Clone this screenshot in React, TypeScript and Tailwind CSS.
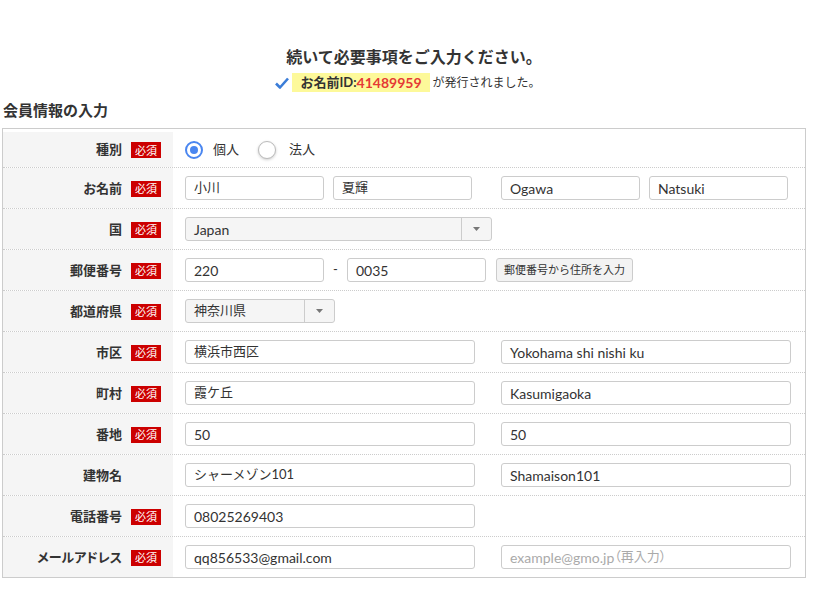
import React from "react";

const FONT = "font-['Lato','Noto_Sans_CJK_JP',sans-serif]";

function Badge() {
  return (
    <span className="inline-flex h-4 w-[30px] items-center justify-center bg-[#cc0000] text-[11px] leading-none text-white">
      必須
    </span>
  );
}

function Row({
  label,
  required = true,
  children,
  last = false,
  h = "h-[41px]",
  extra = "",
}: {
  label: string;
  required?: boolean;
  children?: React.ReactNode;
  last?: boolean;
  h?: string;
  extra?: string;
}) {
  return (
    <div className={`flex ${h} ${extra} ${last ? "" : "border-b border-dotted border-[#cccccc]"}`}>
      <div className="flex w-[170px] shrink-0 items-center justify-end gap-[9px] bg-[#f5f5f5] pr-3 pt-[1px]">
        <span className="text-[13px] font-bold text-[#333] [font-feature-settings:'palt']">{label}</span>
        {required ? <Badge /> : <span className="w-[30px]" />}
      </div>
      <div className="flex flex-1 items-center pl-3">{children}</div>
    </div>
  );
}

function Input({
  value,
  w,
  placeholder,
  jp = false,
}: {
  value?: string;
  w: string;
  placeholder?: React.ReactNode;
  jp?: boolean;
}) {
  return (
    <div
      className={`flex h-6 ${w} items-center rounded-[3px] border border-[#cccccc] bg-white px-2 ${
        jp ? "text-[13px]" : "text-[14px]"
      } ${value ? "text-[#333]" : "text-[#aaaaaa]"}`}
    >
      {value ?? placeholder}
    </div>
  );
}

function Select({ value, w, jp = false }: { value: string; w: string; jp?: boolean }) {
  return (
    <div
      className={`flex h-6 ${w} items-stretch rounded-[3px] border border-[#cccccc] bg-[#f5f5f5] ${
        jp ? "text-[13px]" : "text-[14px]"
      } text-[#333]`}
    >
      <div className="flex flex-1 items-center px-2">{value}</div>
      <div className="flex w-[30px] items-center justify-center border-l border-[#cccccc]">
        <svg width="7" height="4" viewBox="0 0 7 4">
          <path d="M0 0 L7 0 L3.5 4 Z" fill="#777" />
        </svg>
      </div>
    </div>
  );
}

export default function App() {
  return (
    <div className={`min-h-[601px] w-[828px] bg-white ${FONT} text-[#333]`}>
      <div className="pt-[45px]">
        <h1 className="h-6 text-center text-[16px] font-bold leading-6 text-[#333]">
          続いて必要事項をご入力ください。
        </h1>
        <div className="mt-1 flex h-[19px] items-center justify-center">
          <svg width="14" height="12" viewBox="0 0 14 12" className="ml-[-12px] mr-[3px]">
            <path d="M1 6.5 L5 10.5 L13 1.5" stroke="#3b7dd8" strokeWidth="2.6" fill="none" strokeLinejoin="round" />
          </svg>
          <span className="flex h-[19px] items-center bg-[#fdf99a] px-2 font-bold">
            <span className="text-[13px] text-[#333]">お名前ID:</span>
            <span className="text-[14px] text-[#e53935]">41489959</span>
          </span>
          <span className="ml-[3px] text-[12px] text-[#333]">が発行されました。</span>
        </div>
        <h2 className="mt-2 h-5 pl-[3px] text-[15px] font-bold leading-5 text-[#333]">会員情報の入力</h2>
      </div>

      <div className="ml-[2px] mt-2 w-[804px] border border-[#cccccc]">
        <Row label="種別" h="h-[39px]" extra="pt-[3px]">
          <div className="flex items-center text-[13px]">
            <span className="flex h-[18px] w-[18px] items-center justify-center rounded-full border-2 border-[#4a86f0]">
              <span className="h-2 w-2 rounded-full bg-[#4a86f0]" />
            </span>
            <span className="ml-[10px]">個人</span>
            <span className="ml-[19px] h-[18px] w-[18px] rounded-full border border-[#bbbbbb] bg-white shadow-[0_1px_3px_rgba(0,0,0,0.2)]" />
            <span className="ml-[13px]">法人</span>
          </div>
        </Row>
        <Row label="お名前">
          <div className="flex gap-[9px]">
            <Input value="小川" w="w-[139px]" jp />
            <Input value="夏輝" w="w-[139px]" jp />
          </div>
          <div className="ml-[29px] flex gap-[9px]">
            <Input value="Ogawa" w="w-[139px]" />
            <Input value="Natsuki" w="w-[139px]" />
          </div>
        </Row>
        <Row label="国">
          <Select value="Japan" w="w-[307px]" />
        </Row>
        <Row label="郵便番号">
          <Input value="220" w="w-[139px]" />
          <span className="w-[23px] text-center text-[13px]">-</span>
          <Input value="0035" w="w-[139px]" />
          <div className="ml-[10px] flex h-6 items-center rounded-[3px] border border-[#cccccc] bg-[#f3f3f3] px-[7px] text-[11px] text-[#333]">
            郵便番号から住所を入力
          </div>
        </Row>
        <Row label="都道府県">
          <Select value="神奈川県" w="w-[150px]" jp />
        </Row>
        <Row label="市区">
          <Input value="横浜市西区" w="w-[290px]" jp />
          <div className="ml-[26px]">
            <Input value="Yokohama shi nishi ku" w="w-[290px]" />
          </div>
        </Row>
        <Row label="町村">
          <Input value="霞ケ丘" w="w-[290px]" jp />
          <div className="ml-[26px]">
            <Input value="Kasumigaoka" w="w-[290px]" />
          </div>
        </Row>
        <Row label="番地">
          <Input value="50" w="w-[290px]" />
          <div className="ml-[26px]">
            <Input value="50" w="w-[290px]" />
          </div>
        </Row>
        <Row label="建物名" required={false}>
          <Input value="シャーメゾン101" w="w-[290px]" jp />
          <div className="ml-[26px]">
            <Input value="Shamaison101" w="w-[290px]" />
          </div>
        </Row>
        <Row label="電話番号">
          <Input value="08025269403" w="w-[290px]" />
        </Row>
        <Row label="メールアドレス" last h="h-[40px]">
          <Input value="qq856533@gmail.com" w="w-[290px]" />
          <div className="ml-[26px]">
            <Input
              w="w-[290px]"
              placeholder={
                <>
                  <span className="text-[14px]">example@gmo.jp</span>
                  <span className="text-[13px] [font-feature-settings:'palt']">（再入力）</span>
                </>
              }
            />
          </div>
        </Row>
      </div>
    </div>
  );
}
